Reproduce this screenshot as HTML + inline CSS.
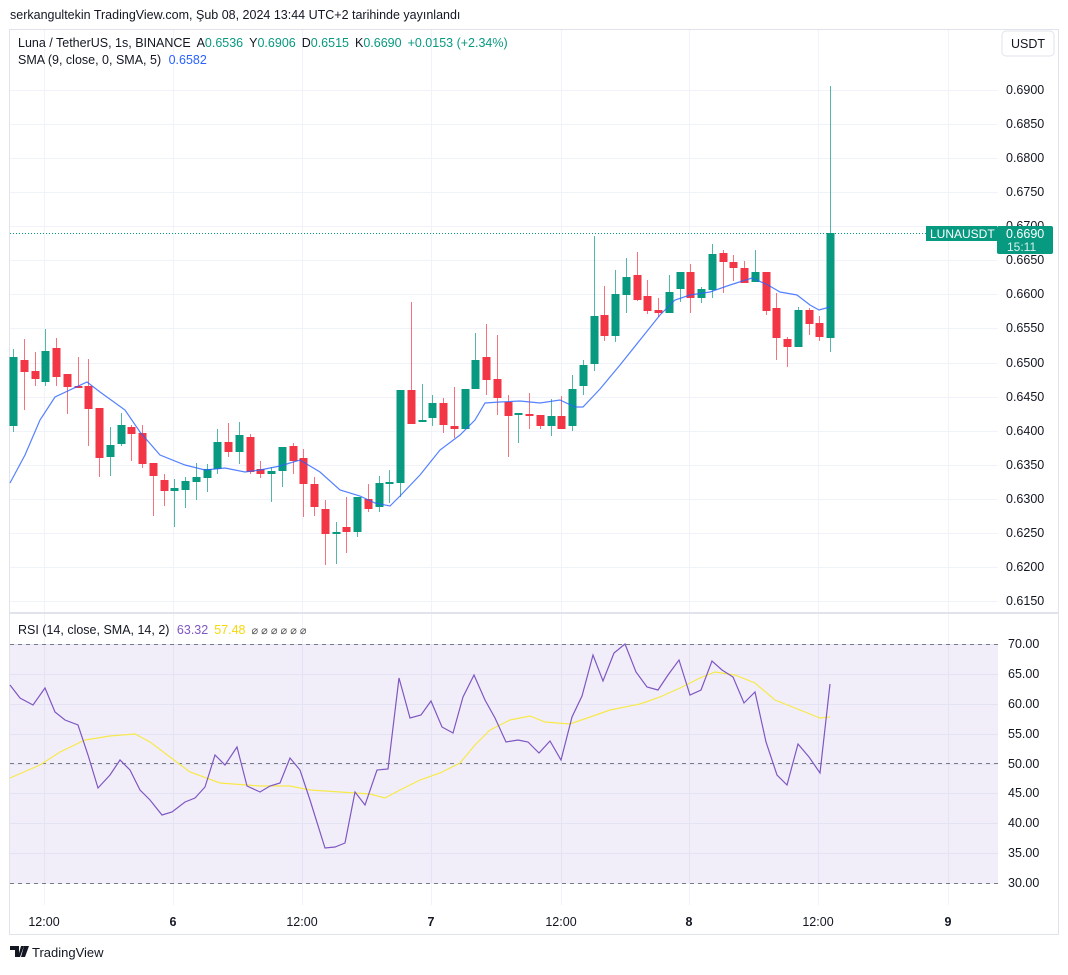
<!DOCTYPE html>
<html><head><meta charset="utf-8"><style>
body{margin:0;background:#fff;font-family:"Liberation Sans",sans-serif;}
svg text{font-family:"Liberation Sans",sans-serif;}
</style></head><body>
<svg id="s" width="1068" height="970" viewBox="0 0 1068 970" xmlns="http://www.w3.org/2000/svg">
<rect x="0" y="0" width="1068" height="970" fill="#fff"/>
<text x="10" y="19" font-size="12.5" fill="#131722">serkangultekin TradingView.com, Şub 08, 2024 13:44 UTC+2 tarihinde yayınlandı</text>
<rect x="9.5" y="29.5" width="1049" height="905" fill="none" stroke="#e0e3eb"/>
<g id="grid" stroke="#f0f3fa" stroke-width="1"></g>
<rect x="10" y="644" width="988" height="239" fill="#7e57c2" fill-opacity="0.1"/>
<line x1="10" y1="613" x2="1058" y2="613" stroke="#e0e3eb" stroke-width="2"/>
<g stroke="#787b86" stroke-dasharray="4,4" stroke-width="1">
<line x1="10" y1="644.5" x2="998" y2="644.5"/><line x1="10" y1="763.5" x2="998" y2="763.5"/><line x1="10" y1="883.5" x2="998" y2="883.5"/>
</g>
<g id="candles"></g>
<polyline fill="none" stroke="#2962ff" stroke-opacity="0.8" stroke-width="1.2" points="10,483 25,455 40,420 55,397 87,382 100,392 125,410 140,432 160,455 185,465 205,470 225,468 245,472 260,470 280,466 300,460 320,472 340,490 360,496 375,503 390,506 400,496 420,475 440,450 460,435 475,420 485,403 500,402 520,401 540,403 560,400 575,407 583,407 600,389 620,365 640,340 660,315 675,300 690,295 710,292 730,285 752,278 768,285 780,292 797,295 810,305 819,310 830,307"/>
<line x1="10" y1="233.5" x2="926" y2="233.5" stroke="#089981" stroke-dasharray="1,2"/>
<polyline fill="none" stroke="#f7e94a" stroke-width="1.2" points="10,778 40,765 60,752 85,740 110,736 135,734 150,742 170,757 190,772 220,783 260,786 290,786 310,790 340,792 370,794 385,798 400,790 420,780 440,773 460,763 475,745 490,730 510,720 530,716 545,722 570,724 590,717 610,710 640,704 660,697 680,688 700,678 715,672 735,675 755,683 775,700 800,710 820,718 830,717"/>
<polyline fill="none" stroke="#7e57c2" stroke-width="1.2" points="10,685 20,698 33,705 45,688 55,712 65,720 78,725 88,755 98,788 110,775 120,760 130,770 140,790 150,800 162,815 172,812 185,802 195,798 205,787 215,755 225,765 237,747 247,786 260,792 270,786 280,783 290,758 300,770 310,800 325,848 335,847 345,843 355,792 365,805 377,770 388,769 399,678 410,718 421,715 431,701 442,727 453,733 463,697 474,675 485,700 495,718 506,742 518,740 528,742 539,753 550,741 561,760 572,717 582,696 593,655 603,681 614,653 625,644 636,672 647,687 658,690 668,675 679,660 690,695 701,690 712,661 722,670 733,677 744,703 755,692 766,742 777,775 787,785 798,744 809,757 820,773 830,684"/>
<g id="plabels" font-size="12.5" fill="#131722"></g>
<rect x="1002" y="31" width="52" height="25" rx="4" fill="#fff" stroke="#e0e3eb"/>
<text x="1028" y="48" font-size="12.5" fill="#131722" text-anchor="middle">USDT</text>
<rect x="926" y="226" width="71" height="15" fill="#089981"/>
<text x="930" y="238" font-size="12" fill="#fff">LUNAUSDT</text>
<rect x="997" y="226" width="56" height="28" rx="2" fill="#089981"/>
<text x="1006" y="238" font-size="12.5" fill="#fff">0.6690</text>
<text x="1007" y="251" font-size="12" fill="#d7f1ec">15:11</text>
<text x="18" y="47" font-size="12.5" fill="#131722">Luna / TetherUS, 1s, BINANCE <tspan dx="3">A</tspan><tspan fill="#089981">0.6536</tspan><tspan dx="6">Y</tspan><tspan fill="#089981">0.6906</tspan><tspan dx="6">D</tspan><tspan fill="#089981">0.6515</tspan><tspan dx="6">K</tspan><tspan fill="#089981">0.6690</tspan><tspan dx="6" fill="#089981">+0.0153 (+2.34%)</tspan></text>
<text x="18" y="64" font-size="12.5" fill="#131722">SMA (9, close, 0, SMA, 5) <tspan dx="4" fill="#2962ff">0.6582</tspan></text>
<text x="18" y="634" font-size="12.5" fill="#131722">RSI (14, close, SMA, 14, 2) <tspan dx="4" fill="#7e57c2">63.32</tspan><tspan dx="6" fill="#f5d90a">57.48</tspan><tspan dx="6" fill="#555" font-size="11">⌀ ⌀ ⌀ ⌀ ⌀ ⌀</tspan></text>
<g font-size="12.5" fill="#131722" text-anchor="middle">
<text x="44" y="926">12:00</text><text x="173" y="926" font-weight="bold">6</text><text x="302" y="926">12:00</text><text x="431" y="926" font-weight="bold">7</text><text x="561" y="926">12:00</text><text x="689" y="926" font-weight="bold">8</text><text x="818" y="926">12:00</text><text x="948" y="926" font-weight="bold">9</text>
</g>
<g fill="#131722"><path d="M10 946h9v11h-4v-7h-5z"/><path d="M21 946h3l-4 11h-2z" /><path d="M24 946h5l-4 11h-4z"/></g>
<text x="32" y="957" font-size="13" fill="#131722">TradingView</text>
</svg>
<script>
var NS="http://www.w3.org/2000/svg",s=document.getElementById('s');
function el(p,t,a){var e=document.createElementNS(NS,t);for(var k in a)e.setAttribute(k,a[k]);p.appendChild(e);return e;}
var g=document.getElementById('grid');
[44,173,302,431,561,689,818,948].forEach(function(x){el(g,'line',{x1:x+.5,y1:30,x2:x+.5,y2:905});});
for(var i=0;i<16;i++){var y=Math.round(90+i*34.07)+.5;el(g,'line',{x1:10,y1:y,x2:998,y2:y});}
for(var i=0;i<9;i++){var y=Math.round(644+i*29.875)+.5;el(g,'line',{x1:10,y1:y,x2:998,y2:y});}
var pl=document.getElementById('plabels');
var P=["0.6900","0.6850","0.6800","0.6750","0.6700","0.6650","0.6600","0.6550","0.6500","0.6450","0.6400","0.6350","0.6300","0.6250","0.6200","0.6150"];
P.forEach(function(t,i){var e=el(pl,'text',{x:1006,y:Math.round(90+i*34.07)+4});e.textContent=t;});
var R=["70.00","65.00","60.00","55.00","50.00","45.00","40.00","35.00","30.00"];
R.forEach(function(t,i){var e=el(pl,'text',{x:1008,y:Math.round(644+i*29.875)+4});e.textContent=t;});
var C=[[1,357,426,349,432],[0,360,372,339,410],[0,371,379,352,386],[1,351,382,329,386],[0,348,377,338,386],[0,374,387,374,414],[0,386,388,357,387],[0,386,409,359,446],[0,408,458,408,477],[1,445,457,427,476],[1,425,444,413,446],[0,427,434,425,461],[0,433,464,425,468],[0,463,476,463,516],[0,480,491,474,506],[1,488,491,479,527],[1,481,490,477,508],[1,477,482,463,500],[1,469,478,464,492],[1,442,469,429,474],[0,442,452,423,457],[1,435,452,422,464],[0,437,472,434,474],[0,469,474,461,478],[1,471,474,467,502],[1,447,471,447,487],[0,446,461,443,474],[0,458,484,449,517],[0,484,507,477,516],[0,509,534,500,565],[1,532,534,522,564],[0,527,532,497,553],[1,497,532,497,537],[0,499,509,484,512],[1,483,507,476,512],[1,482,484,470,503],[1,390,483,390,497],[0,390,424,302,424],[1,420,422,384,422],[1,403,418,395,426],[0,403,425,398,433],[0,426,429,387,438],[1,389,429,389,429],[1,360,389,333,389],[0,357,380,324,395],[0,379,398,335,415],[0,402,416,395,457],[1,413,415,413,443],[0,414,416,393,429],[0,415,426,415,429],[1,416,426,399,436],[0,416,429,396,429],[1,389,426,375,431],[1,365,386,360,395],[1,316,364,236,371],[0,315,336,286,341],[1,294,336,270,342],[1,277,295,258,313],[0,275,300,252,301],[0,296,311,280,314],[0,310,313,298,317],[1,292,313,275,313],[1,272,289,272,302],[0,272,298,264,313],[1,289,298,287,303],[1,254,290,244,298],[0,253,262,250,293],[0,262,268,255,281],[0,268,283,261,283],[1,272,282,250,282],[0,272,311,272,315],[0,308,338,293,360],[0,339,347,337,367],[1,310,347,307,347],[0,310,324,308,335],[0,323,337,316,341],[1,233,338,86,352]];
var cg=document.getElementById('candles');var n=C.length;
C.forEach(function(c,i){var x=Math.round(13+i*(830-13)/(n-1));var col=c[0]?'#089981':'#f23645';
el(cg,'line',{x1:x+.5,y1:c[3],x2:x+.5,y2:c[4],stroke:col,'stroke-opacity':0.7});
el(cg,'rect',{x:x-3.5,y:c[1],width:8,height:Math.max(2,c[2]-c[1]),fill:col});});
</script>
</body></html>
